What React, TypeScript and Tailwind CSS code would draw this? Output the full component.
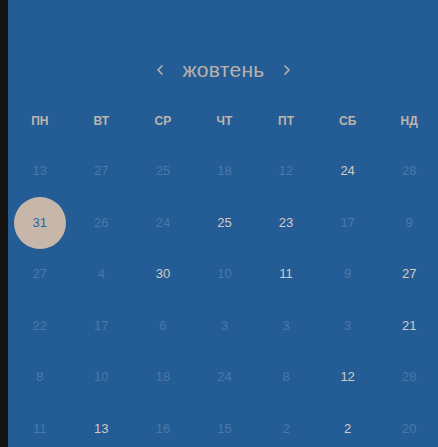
import { ChevronLeft, ChevronRight } from "lucide-react";

const days = ["ПН", "ВТ", "СР", "ЧТ", "ПТ", "СБ", "НД"];

// [value, bright]
const rows: [number, boolean][][] = [
  [[13, false], [27, false], [25, false], [18, false], [12, false], [24, true], [28, false]],
  [[31, false], [26, false], [24, false], [25, true], [23, true], [17, false], [9, false]],
  [[27, false], [4, false], [30, true], [10, false], [11, true], [9, false], [27, true]],
  [[22, false], [17, false], [6, false], [3, false], [3, false], [3, false], [21, true]],
  [[8, false], [10, false], [18, false], [24, false], [8, false], [12, true], [28, false]],
  [[11, false], [13, true], [16, false], [15, false], [2, false], [2, true], [20, false]],
];

const App = () => {
  return (
    <div className="flex w-[438px] h-[447px] overflow-hidden bg-[#245d96] font-['Liberation_Sans',Arial,sans-serif]">
      <div className="w-[8px] shrink-0 bg-[#161412]" />
      <div className="w-[432px] shrink-0 pl-[1px] pt-[56px]">
        {/* month header */}
        <div className="flex items-center justify-center h-[28px] mb-[15px] pr-[2px] text-[#b9b1a9]">
          <ChevronLeft className="h-4 w-4" strokeWidth={2.5} />
          <span className="mx-[14px] text-[21px] tracking-[0.3px]">жовтень</span>
          <ChevronRight className="h-4 w-4" strokeWidth={2.5} />
        </div>

        {/* weekdays */}
        <div className="grid grid-cols-7 h-[44px] items-center">
          {days.map((d) => (
            <div key={d} className="text-center text-[12px] font-bold text-[#bdb5ad]">
              {d}
            </div>
          ))}
        </div>

        {/* days */}
        <div className="mt-[2px]">
          {rows.map((row, i) => (
            <div key={i} className="grid grid-cols-7 h-[51.6px] items-center">
              {row.map(([n, bright], j) =>
                i === 1 && j === 0 ? (
                  <div key={j} className="flex justify-center">
                    <div className="flex items-center justify-center w-[52px] h-[52px] rounded-full bg-[#c6b7aa] text-[13px] text-[#2c64a0]">
                      {n}
                    </div>
                  </div>
                ) : (
                  <div
                    key={j}
                    className={
                      bright
                        ? "text-center text-[13px] text-[#d3cbc3]"
                        : "text-center text-[13px] text-[#4a78a8]"
                    }
                  >
                    {n}
                  </div>
                )
              )}
            </div>
          ))}
        </div>
      </div>
    </div>
  );
};

export default App;
